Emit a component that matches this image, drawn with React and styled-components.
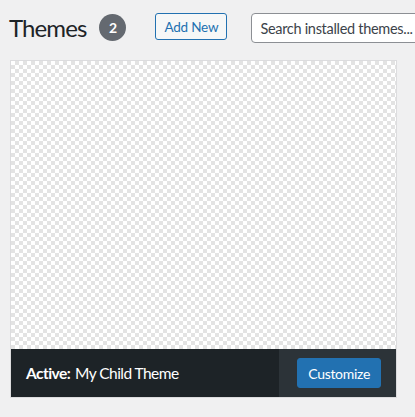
import React from "react";
import styled, { createGlobalStyle } from "styled-components";

const GlobalStyle = createGlobalStyle`
  html, body {
    margin: 0;
    padding: 0;
    background: #f0f0f1;
    overflow: hidden;
    font-family: Lato, "Noto Sans", sans-serif;
    color: #1d2327;
  }
`;

const Wrap = styled.div`
  padding: 13px 0 0 9px;
  width: 520px;
`;

const Header = styled.div`
  display: flex;
  align-items: center;
  height: 30px;
`;

const Title = styled.h1`
  margin: 0;
  font-size: 24px;
  font-weight: 400;
  line-height: 30px;
  letter-spacing: -0.9px;
  color: #1d2327;
`;

const Count = styled.span`
  display: inline-flex;
  align-items: center;
  justify-content: center;
  width: 27px;
  height: 27px;
  margin: -2px 0 0 13px;
  border-radius: 50%;
  background: #646970;
  color: #fff;
  font-size: 14px;
  font-weight: 700;
`;

const AddNew = styled.button`
  margin: -3px 0 0 29px;
  height: 27px;
  padding: 0 8px;
  border: 1px solid #2271b1;
  border-radius: 3px;
  background: #f6f7f7;
  color: #2271b1;
  font-family: inherit;
  font-size: 13.5px;
  letter-spacing: -0.2px;
  cursor: pointer;
`;

const Search = styled.input`
  margin-left: 24px;
  width: 200px;
  height: 30px;
  box-sizing: border-box;
  padding: 0 8px;
  border: 1px solid #8c8f94;
  border-radius: 4px;
  background: #fff;
  font-family: inherit;
  font-size: 14.5px;
  letter-spacing: -0.3px;
  &::placeholder {
    color: #3c434a;
  }
`;

const Card = styled.div`
  margin: 17px 0 0 1px;
  width: 385px;
  border: 1px solid #dcdcde;
  box-shadow: 0 1px 1px -1px rgba(0, 0, 0, 0.1);
  background: #fff;
`;

const Screenshot = styled.div`
  height: 288px;
  background-color: #fff;
  background-image: linear-gradient(45deg, #e3e3e3 25%, transparent 25%, transparent 75%, #e3e3e3 75%),
    linear-gradient(45deg, #e3e3e3 25%, transparent 25%, transparent 75%, #e3e3e3 75%);
  background-size: 8px 8px;
  background-position: 0 0, 4px 4px;
`;

const Footer = styled.div`
  display: flex;
  height: 48px;
  background: #1d2327;
`;

const Name = styled.h2`
  flex: 1;
  margin: 0;
  padding-left: 15px;
  display: flex;
  align-items: center;
  font-size: 15.5px;
  font-weight: 400;
  letter-spacing: -0.55px;
  color: #fff;
  white-space: nowrap;

  b {
    font-weight: 700;
    margin-right: 5px;
  }
`;

const Actions = styled.div`
  display: flex;
  align-items: center;
  padding: 0 15px 0 18px;
  background: #2c3338;
`;

const Primary = styled.button`
  height: 30px;
  padding: 0 10px;
  border: 1px solid #2271b1;
  border-radius: 3px;
  background: #2271b1;
  color: #fff;
  font-family: inherit;
  font-size: 14px;
  letter-spacing: -0.3px;
  cursor: pointer;
`;

export default function App() {
  return (
    <>
      <GlobalStyle />
      <Wrap>
        <Header>
          <Title>Themes</Title>
          <Count>2</Count>
          <AddNew>Add New</AddNew>
          <Search placeholder="Search installed themes..." />
        </Header>
        <Card>
          <Screenshot />
          <Footer>
            <Name>
              <b>Active:</b>My Child Theme
            </Name>
            <Actions>
              <Primary>Customize</Primary>
            </Actions>
          </Footer>
        </Card>
      </Wrap>
    </>
  );
}
